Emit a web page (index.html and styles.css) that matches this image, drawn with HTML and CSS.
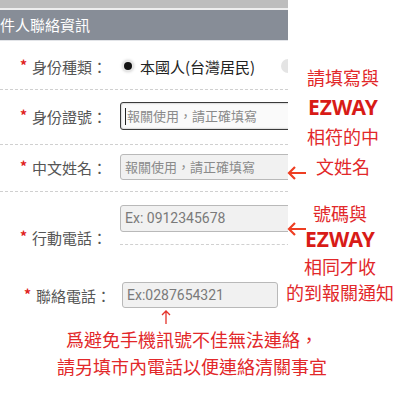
FILE: index.html
```html
<!DOCTYPE html>
<html lang="zh-Hant">
<head>
    <meta charset="UTF-8">
    <meta name="viewport" content="width=device-width, initial-scale=1.0">
    <title>收件人聯絡資訊</title>
    <link rel="stylesheet" href="styles.css">
</head>
<body>
    <div class="page">
        <!-- Form screenshot area -->
        <div class="form">
            <div class="topbar"></div>
            <div class="header">件人聯絡資訊</div>

            <div class="row row-type">
                <div class="label"><span class="star">*</span>身份種類：</div>
                <div class="radio"><span class="dot"></span>本國人(台灣居民)</div>
                <span class="radio-off"></span>
            </div>

            <div class="row row-id">
                <div class="label"><span class="star">*</span>身份證號：</div>
                <div class="input focused"><span class="caret"></span>報關使用，請正確填寫</div>
            </div>

            <div class="row row-name">
                <div class="label"><span class="star">*</span>中文姓名：</div>
                <div class="input">報關使用，請正確填寫</div>
            </div>

            <div class="row row-mobile">
                <div class="label"><span class="star">*</span>行動電話：</div>
                <div class="field">
                    <div class="input latin">Ex: 0912345678</div>
                    <div class="hint-line"></div>
                </div>
            </div>

            <div class="row row-phone">
                <div class="label"><span class="star">*</span>聯絡電話：</div>
                <div class="input latin short">Ex:0287654321</div>
            </div>
        </div>

        <!-- Callouts -->
        <div class="note note-name">
            <span class="arrow arrow-name">
                <svg width="20" height="14" viewBox="0 0 20 14"><path d="M19 7H2M8 1L2 7l6 6" fill="none" stroke="#ee3e22" stroke-width="2.2"/></svg>
            </span>
            請填寫與<br><b>EZWAY</b><br>相符的中<br>文姓名
        </div>

        <div class="note note-mobile">
            <span class="arrow arrow-mobile">
                <svg width="20" height="14" viewBox="0 0 20 14"><path d="M19 7H2M8 1L2 7l6 6" fill="none" stroke="#ee3e22" stroke-width="2.2"/></svg>
            </span>
            號碼與<br><b>EZWAY</b><br>相同才收<br>的到報關通知
        </div>

        <div class="bottom-note">
            <svg class="up" width="10" height="14" viewBox="0 0 10 14"><path d="M5 14V1M1 5l4-4 4 4" fill="none" stroke="#e4332a" stroke-width="1.3"/></svg>
            <p>爲避免手機訊號不佳無法連絡，<br>請另填市內電話以便連絡清關事宜</p>
        </div>
    </div>
</body>
</html>
```

FILE: styles.css
```css
body {
    margin: 0;
    background: #fff;
    font-family: "Noto Sans CJK TC", "Noto Sans", sans-serif;
}

.page {
    position: relative;
    width: 400px;
    height: 400px;
    overflow: hidden;
}

/* Form */
.form {
    width: 288px;
    overflow: hidden;
}

.topbar {
    height: 8px;
    background-color: #bdbdbd;
    border-bottom: 2px solid #eeeeee;
}

.header {
    height: 30px;
    line-height: 30px;
    background-color: #878d97;
    border-bottom: 1px solid #e2e4e8;
    color: #fff;
    font-size: 15px;
    white-space: nowrap;
}

.row {
    display: flex;
    align-items: center;
    border-bottom: 1px dashed #d0d0d0;
    white-space: nowrap;
}

.label {
    flex: none;
    width: 100px;
    padding-left: 20px;
    font-size: 15px;
    color: #555;
}

.star {
    display: inline-block;
    width: 12px;
    color: #e02020;
    font-size: 14px;
    font-weight: bold;
    vertical-align: 2px;
}

.row-type {
    height: 46px;
    padding-top: 2px;
}

.radio {
    display: flex;
    align-items: center;
    margin-left: 4px;
    font-size: 15px;
    color: #222;
}

.dot {
    width: 8px;
    height: 8px;
    margin-right: 8px;
    border-radius: 50%;
    background: #111;
    box-shadow: 0 0 0 2px #e6e6e6, 0 0 3px 2px #ccc;
}

.radio-off {
    flex: none;
    width: 14px;
    height: 14px;
    margin-left: 26px;
    border-radius: 50%;
    background: #e4e4e4;
}

.input {
    flex: none;
    box-sizing: border-box;
    width: 200px;
    height: 26px;
    line-height: 24px;
    padding-left: 4px;
    border: 1px solid #b9b9b9;
    border-radius: 3px;
    background-color: #f1f1f1;
    color: #8a8a8a;
    font-size: 13px;
}

.input.latin {
    font-family: Roboto, "Liberation Sans", sans-serif;
    font-size: 14px;
    color: #7a7a7a;
}

.input.short {
    width: 156px;
}

.input.focused {
    position: relative;
    height: 28px;
    line-height: 26px;
    border-color: #3a3a3a;
    background-color: #fafafa;
    box-shadow: inset 0 0 2px #999;
}

.caret {
    display: inline-block;
    width: 1px;
    height: 17px;
    margin-right: 1px;
    vertical-align: -4px;
    background: #222;
}

.row-id {
    padding: 12px 0 14px;
}

.row-name {
    padding: 9px 0 11px;
}

.row-mobile {
    border-bottom: none;
    padding-top: 13px;
}

.field {
    display: flex;
    flex-direction: column;
}

.field .input {
    height: 27px;
}

.hint-line {
    width: 180px;
    height: 0;
    margin: 12px 0 24px;
    border-top: 1px dashed #d0d0d0;
}

.row-phone {
    border-bottom: none;
    padding-top: 13px;
}

.row-phone .label {
    width: 98px;
    padding-left: 24px;
}

/* Callouts */
.note {
    position: absolute;
    color: #e2282a;
    font-size: 18px;
    text-align: center;
}

.note b {
    color: #d81b17;
    font-family: "Noto Sans", "Open Sans", sans-serif;
    font-size: 21px;
    font-weight: bold;
}

.note-name {
    left: 302px;
    top: 63px;
    width: 82px;
    line-height: 29.5px;
}

.note-mobile {
    left: 284px;
    top: 200px;
    width: 112px;
    line-height: 26.3px;
}

.arrow {
    position: absolute;
}

.arrow-name {
    left: -15px;
    top: 95px;
}

.arrow-mobile {
    left: 3px;
    top: 15px;
}

.bottom-note {
    position: absolute;
    left: 0;
    top: 310px;
    width: 384px;
    text-align: center;
    color: #e2282a;
}

.bottom-note .up {
    position: absolute;
    left: 161px;
    top: 0;
}

.bottom-note p {
    margin: 16px 0 0;
    font-size: 18px;
    line-height: 27px;
}
```
